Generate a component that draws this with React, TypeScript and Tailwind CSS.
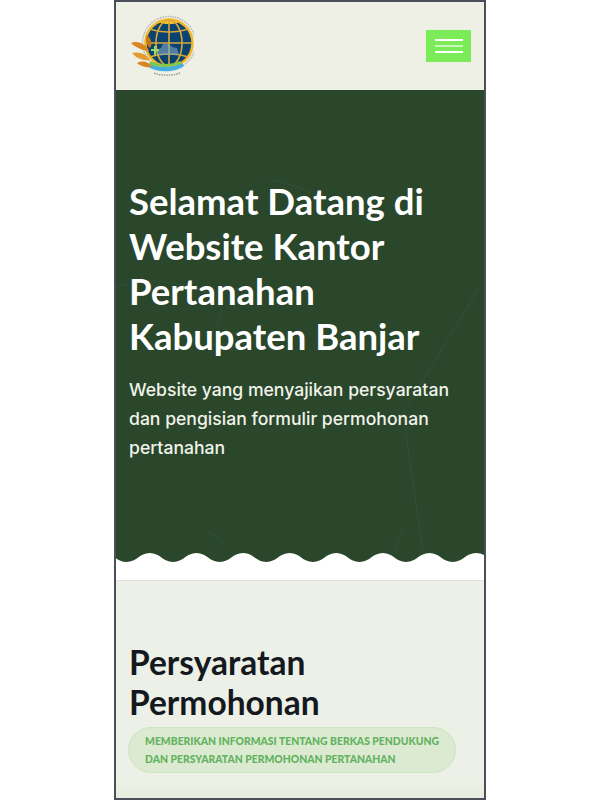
const headingFont = { fontFamily: '"Lato", "Noto Sans", sans-serif' };

function Logo() {
  return (
    <svg width="64" height="64" viewBox="0 0 64 64" className="block blur-[0.6px]">
      <circle cx="39" cy="29" r="26.500" fill="none" stroke="#8d8f8a" strokeWidth="1.500" strokeDasharray="1.500 1" opacity="0.6" />
      <circle cx="39" cy="29" r="23.500" fill="#0a4272" stroke="#f4b526" strokeWidth="2.500" />
      <path d="M29 8c6-3 14-3 20 0-6 3-14 3-20 0z" fill="#f6c12f" />
      <g fill="none" stroke="#d6a838" strokeWidth="1.600">
        <ellipse cx="39" cy="29" rx="13" ry="23" />
        <path d="M39 6v46M16 29h46M20 15c11 4 27 4 38 0M20 43c11-4 27-4 38 0" />
      </g>
      <path d="M27 41v-5l4-2 2-4h6l3 3 5 1 2 7z" fill="#7fa9c4" opacity="0.6" />
      <path d="M21 35h3v-3h2v3h3v2h-3v4h-2v-4h-3z" fill="#96dc6a" />
      <path d="M17 52c9 7 28 7 37 0l-2-3c-9 5-24 5-33 0z" fill="#45aee0" />
      <path d="M19 50c9 4 24 4 33-1l-2-2c-9 4-21 4-29 0z" fill="#86c648" />
      <path d="M24 59c8 3 18 3 26 0" fill="none" stroke="#9a9c98" strokeWidth="1.500" strokeDasharray="1.500 1" />
      <path d="M19 37C13 37 5 33 1 29c7-3 15 1 18 8z" fill="#d98520" />
      <path d="M20 46C13 47 6 44 2 39c7-2 15 1 18 7z" fill="#e39a30" />
      <path d="M22 53c-6 1-12-1-15-4 6-3 12-1 15 4z" fill="#d98520" />
      <path d="M20 34c-4-3-5-9-3-13 4 3 6 9 3 13z" fill="#c97818" />
    </svg>
  );
}

function Wave() {
  const half = 23.3;
  // walks right to left, crest at x=360 and every 46.6px before it
  let d = "M383.300 9";
  for (let i = 0, x = 383.300, up = false; i < 18; i++, x -= half, up = !up) {
    const y0 = up ? 0 : 9;
    const y1 = up ? 9 : 0;
    d += `C${x - half * 0.45} ${y0} ${x - half * 0.55} ${y1} ${x - half} ${y1}`;
  }
  d += "V-2H383.300Z";
  return (
    <svg width="368" height="27" viewBox="0 0 368 27" className="block bg-white">
      <path d={d} fill="#2a472c" />
    </svg>
  );
}

export default function App() {
  return (
    <div className="w-[600px] h-[800px] bg-white flex justify-center overflow-hidden">
      <div className="w-[372px] h-[800px] border-2 border-[#4b4f5a] overflow-hidden bg-[#edf0e6]">
        <header className="h-[88px] bg-[#eef0e6] flex items-center justify-between pl-[14px] pr-[13px]">
          <Logo />
          <button className="w-[45px] h-[32px] bg-[#7bec57] flex flex-col items-center justify-center gap-[4.300px]">
            <span className="block w-[28px] h-[2px] bg-white" />
            <span className="block w-[28px] h-[2px] bg-white opacity-60" />
            <span className="block w-[28px] h-[2px] bg-white" />
          </button>
        </header>

        <section className="relative h-[463px] bg-[#2a472c] px-[14px] pt-[89px] overflow-hidden">
          <svg className="absolute inset-0" width="368" height="463" viewBox="0 0 368 463" fill="none" stroke="#31503a" strokeWidth="1">
            <path d="M154 90c16 2 28 6 40 13" />
            <path d="M-6 200c30-12 50-12 90 0s12 40 10 47" />
            <path d="M370 187L287 323l20 140" />
            <path d="M91 440l16 12-13 11" />
            <path d="M287 440l-10 23" />
          </svg>
          <h1 style={headingFont} className="relative -ml-[1px] text-white text-[36.500px] leading-[45px] font-bold">
            Selamat Datang di Website Kantor Pertanahan Kabupaten Banjar
          </h1>
          <p style={{ fontFamily: '"Inter", sans-serif' }} className="relative -ml-[1px] mt-[16px] text-[#f1f3ea] text-[17.600px] leading-[29px] font-medium">
            Website yang menyajikan persyaratan dan pengisian formulir permohonan pertanahan
          </p>
        </section>

        <Wave />

        <section className="border-t border-[#dfe3da] px-[14px] pt-[61px] bg-[#edf0e6]">
          <h2 style={headingFont} className="-ml-[1px] text-[#14181f] text-[33.500px] leading-[40px] font-bold">
            Persyaratan Permohonan
          </h2>
          <div className="mt-[5px] -ml-[2px] w-[328px] h-[46px] rounded-[23px] bg-[#dbead1] border border-[#cbe4c1] pl-[16px] pt-[5px]">
            <p style={headingFont} className="text-[#62b25e] text-[10.400px] leading-[17.500px] font-black whitespace-nowrap">
              MEMBERIKAN INFORMASI TENTANG BERKAS PENDUKUNG
              <br />
              DAN PERSYARATAN PERMOHONAN PERTANAHAN
            </p>
          </div>
          <div className="mt-[6px] h-[19px] -mx-[14px] bg-gradient-to-b from-transparent to-[#e8ecdf]" />
        </section>
      </div>
    </div>
  );
}
